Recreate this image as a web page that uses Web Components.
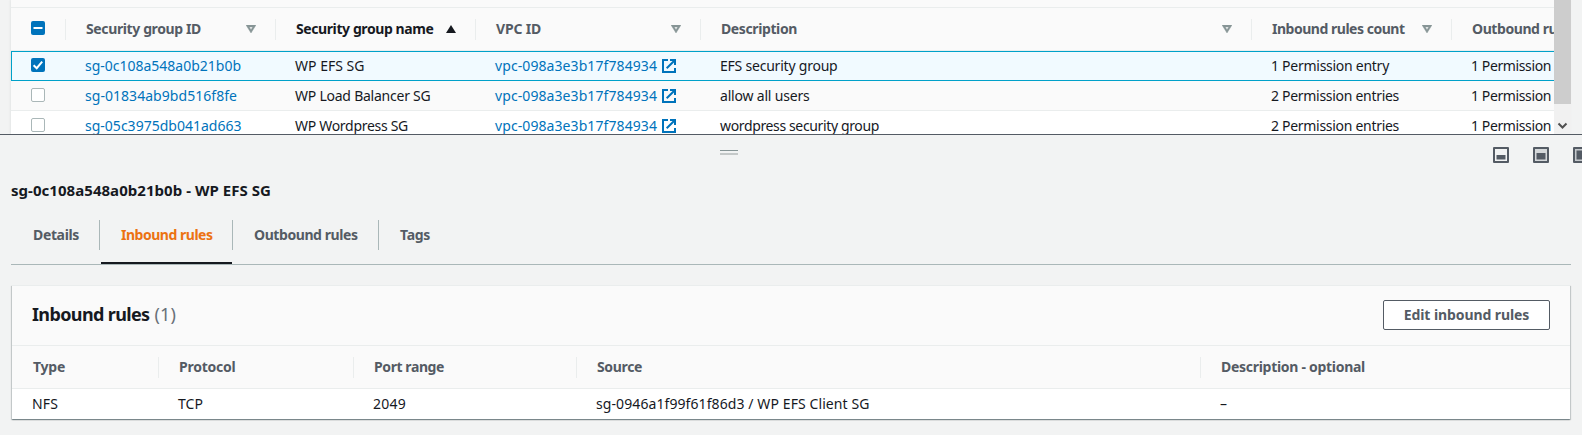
<!DOCTYPE html>
<html lang="en">
<head>
<meta charset="utf-8">
<title>Security groups</title>
<style>
html,body{margin:0;height:100%;overflow:hidden;background:#f2f3f3}
body{font:14px/20px "Noto Sans","Open Sans",sans-serif;color:#16191f}
</style>
</head>
<body>
<sg-page></sg-page>
<script>
const define = (name, html, init) => {
  const tpl = document.createElement('template');
  tpl.innerHTML = html;
  customElements.define(name, class extends HTMLElement {
    constructor() {
      super();
      this.attachShadow({mode: 'open'}).append(tpl.content.cloneNode(true));
    }
    connectedCallback() { if (init) init(this, this.shadowRoot); }
  });
};

/* Single-line label tracked to the given width */
define('fit-text', `<style>:host{display:block;white-space:nowrap;flex:none}span{display:inline-block}</style><span><slot></slot></span>`, (el, root) => {
  const w = parseFloat(el.getAttribute('w'));
  const span = root.querySelector('span');
  const n = el.textContent.length;
  if (w && n) {
    span.style.letterSpacing = '0px';
    span.style.letterSpacing = ((w - span.getBoundingClientRect().width) / n).toFixed(3) + 'px';
  }
});

define('check-box', `<style>:host{display:block;width:14px;height:14px}svg{display:block}.on,.mid{display:none}
:host([state=on]) .on,:host([state=mid]) .mid{display:block}:host([state]) .off{display:none}</style>
<svg width="14" height="14" viewBox="0 0 14 14">
<rect class="off" x=".5" y=".5" width="13" height="13" rx="1.5" fill="#fff" stroke="#aab7b8"/>
<g class="on"><rect width="14" height="14" rx="2" fill="#0073bb"/><path d="M2.6 7.2 5.7 10.2 11.2 3.6" fill="none" stroke="#fff" stroke-width="2"/></g>
<g class="mid"><rect width="14" height="14" rx="2" fill="#0073bb"/><path d="M2.5 7h9" stroke="#fff" stroke-width="2"/></g>
</svg>`);

define('sort-icon', `<style>:host{display:block;width:10px;height:8px}svg{display:block}.up{display:none}:host([up]) .up{display:block}:host([up]) .down{display:none}</style>
<svg width="10" height="8" viewBox="0 0 10 8"><path class="down" d="M0 0h10L5 8zM3.3 2l1.7 2.8L6.7 2z" fill="#879596" fill-rule="evenodd" stroke="#879596" stroke-width=".4"/><path class="up" d="M5 0 10 8H0z" fill="#16191f"/></svg>`);

define('external-link', `<style>:host{display:flex;gap:5px;color:#0073bb}svg{display:block;margin-top:3px}</style>
<fit-text w="162"><slot></slot></fit-text>
<svg width="14" height="14" viewBox="0 0 14 14" fill="none" stroke="#0073bb" stroke-width="2"><path d="M6 1H1v12h12V9"/><path d="M8 1h5v5M12.8 1.2 4.7 9.3"/></svg>`, (el, root) => {
  root.querySelector('fit-text').textContent = el.textContent;
  root.querySelector('fit-text').connectedCallback();
});

define('head-cell', `<style>:host{display:flex;box-sizing:border-box;height:21px;border-left:1px solid #eaeded;padding-left:20px;font-weight:700;color:#545b64;line-height:20px;overflow:visible}
:host([first]){border-left-color:transparent}:host([sorted]){color:#16191f}
::slotted(sort-icon){margin:6px 19px 0 auto}</style><slot></slot>`);

define('group-row', `<style>:host{display:block;height:30px;box-sizing:border-box;border-bottom:1px solid #eaeded;background:#fff}
:host([alt]){background:#fafafa}:host([selected]){background:#f1faff;border:1px solid #00a1c9;border-right:0;margin-top:-1px;height:30px;position:relative}
.r{display:grid;grid-template-columns:54px 210px 200px 225px 551px 200px 102px}
:host([selected]) .r{margin-left:-1px;margin-top:-1px}
.r{padding-top:5px}::slotted(*){padding-left:20px}::slotted(check-box){margin:2px 0 0 20px;padding:0}</style><div class="r"><slot></slot></div>`);

define('groups-table', `<style>
:host{display:block;height:134px;overflow:hidden}
.wrap{display:flex;margin-left:11px;width:1560px;height:134px;box-shadow:-1px 0 2px rgba(0,28,36,.06)}
.t{width:1543px;overflow:hidden;background:#fafafa}
.top{height:7px;border-bottom:1px solid #eaeded}
.head{display:grid;grid-template-columns:54px 210px 200px 225px 551px 200px 102px;height:43px;padding-top:11px;box-sizing:border-box;border-bottom:1px solid #eaeded;margin-bottom:1px}
.head check-box{margin:2px 0 0 20px}
.link{color:#0073bb}
.bar{width:17px;background:#f1f1f1}.thumb{height:104px;background:#cdcdcd}
.bar svg{display:block;margin:17px 0 0 3px}
</style>
<div class="wrap"><div class="t"><div class="top"></div>
<div class="head"><check-box state="mid"></check-box>
<head-cell><fit-text w="115">Security group ID</fit-text><sort-icon></sort-icon></head-cell>
<head-cell sorted><fit-text w="137.5">Security group name</fit-text><sort-icon up></sort-icon></head-cell>
<head-cell><fit-text w="45">VPC ID</fit-text><sort-icon></sort-icon></head-cell>
<head-cell><fit-text w="76">Description</fit-text><sort-icon></sort-icon></head-cell>
<head-cell><fit-text w="132.5">Inbound rules count</fit-text><sort-icon></sort-icon></head-cell>
<head-cell><fit-text w="103.5">Outbound rules</fit-text></head-cell></div>
<group-row selected><check-box state="on"></check-box><fit-text class="link" w="156">sg-0c108a548a0b21b0b</fit-text><fit-text w="69.5">WP EFS SG</fit-text><external-link>vpc-098a3e3b17f784934</external-link><fit-text w="117.5">EFS security group</fit-text><fit-text w="118">1 Permission entry</fit-text><fit-text w="80">1 Permission</fit-text></group-row>
<group-row alt><check-box></check-box><fit-text class="link" w="152">sg-01834ab9bd516f8fe</fit-text><fit-text w="135.5">WP Load Balancer SG</fit-text><external-link>vpc-098a3e3b17f784934</external-link><fit-text w="89.5">allow all users</fit-text><fit-text w="128">2 Permission entries</fit-text><fit-text w="80">1 Permission</fit-text></group-row>
<group-row><check-box></check-box><fit-text class="link" w="156.5">sg-05c3975db041ad663</fit-text><fit-text w="113">WP Wordpress SG</fit-text><external-link>vpc-098a3e3b17f784934</external-link><fit-text w="159">wordpress security group</fit-text><fit-text w="128">2 Permission entries</fit-text><fit-text w="80">1 Permission</fit-text></group-row>
</div><div class="bar"><div class="thumb"></div><svg width="11" height="10" viewBox="0 0 11 10"><path d="M1.5 2.5 5.5 6.5 9.5 2.5" fill="none" stroke="#505050" stroke-width="2"/></svg></div></div>`);

define('split-bar', `<style>:host{display:grid;grid-template-columns:720px 18px 1fr;border-top:1px solid #545b64;height:43px;overflow:hidden}
.grip{grid-column:2;margin-top:15px;height:3px;border-top:1px solid #879596}.grip i{display:block;height:2px;background:#c4c8c8;margin-top:2px}
.icons{display:flex;gap:24px;padding:12px 0 0 755px;min-width:0}svg{display:block;flex:none}</style>
<div class="grip"><i></i></div><div class="icons">
<svg width="16" height="16" viewBox="0 0 16 16"><path d="M1 1h14v14H1z" fill="#f2f3f3" stroke="#545b64" stroke-width="2" stroke-linejoin="round"/><path d="M3.5 8h9v4.5h-9z" fill="#545b64"/></svg>
<svg width="16" height="16" viewBox="0 0 16 16"><path d="M1 1h14v14H1z" fill="#d5d8da" stroke="#545b64" stroke-width="2" stroke-linejoin="round"/><path d="M3.5 6h9v6.5h-9z" fill="#545b64"/></svg>
<svg width="16" height="16" viewBox="0 0 16 16"><path d="M1 1h14v14H1z" fill="#c5c9cc" stroke="#545b64" stroke-width="2" stroke-linejoin="round"/><path d="M3.5 3.5h9v9h-9z" fill="#545b64"/></svg></div>`);

define('tab-item', `<style>:host{display:block;box-sizing:border-box;height:44px;position:relative;font-weight:700;color:#545b64}
.b{box-sizing:border-box;height:30px;border-right:1px solid #aab7b8;padding:5px 0 0 21px}:host([last]) .b{border:0}
:host([active]){color:#ec7211}.u{display:none;position:absolute;left:1px;right:1px;top:42px;height:2px;background:#16191f}:host([active]) .u{display:block}</style><div class="b"><slot></slot></div><div class="u"></div>`);

define('detail-tabs', `<style>:host{display:grid;grid-template-columns:89px 133px 146px 1fr;margin:0 11px;border-bottom:1px solid #aab7b8}tab-item:first-of-type fit-text{margin-left:1px}</style>
<tab-item><fit-text w="46">Details</fit-text></tab-item><tab-item active><fit-text w="91.5">Inbound rules</fit-text></tab-item><tab-item><fit-text w="103.5">Outbound rules</fit-text></tab-item><tab-item last><fit-text w="30">Tags</fit-text></tab-item>`);

define('outline-button', `<style>:host{display:block}button{display:flex;justify-content:center;align-items:center;box-sizing:border-box;width:167px;height:30px;border:1px solid #545b64;border-radius:2px;background:#fff;color:#545b64;font:inherit;font-weight:700;padding:0}</style><button><slot></slot></button>`);

define('rules-card', `<style>:host{display:block;margin:20px 12px 0;height:134px;background:#fff;box-shadow:0 1px 1px 0 rgba(0,28,36,.3),1px 1px 1px 0 rgba(0,28,36,.15),-1px 1px 1px 0 rgba(0,28,36,.15);border-top:1px solid #eaeded;box-sizing:border-box}
.h{display:flex;justify-content:space-between;background:#fafafa;height:60px;box-sizing:border-box;padding:14px 20px 0;border-bottom:1px solid #eaeded}
.title{display:flex;gap:5px;font-size:18px;line-height:26px;margin-top:1px;font-weight:700}.n{font-weight:400;color:#687078}
.c,.r{display:grid;grid-template-columns:146px 195px 223px 624px 1fr}
.c{background:#fafafa;height:43px;box-sizing:border-box;padding-top:11px;border-bottom:1px solid #eaeded}
.r{padding-top:5px}.r fit-text{padding-left:20px}</style>
<div class="h"><div class="title"><fit-text w="117.5">Inbound rules</fit-text><fit-text class="n" w="21.5">(1)</fit-text></div><outline-button><fit-text w="125.5">Edit inbound rules</fit-text></outline-button></div>
<div class="c"><head-cell first><fit-text w="32">Type</fit-text></head-cell><head-cell><fit-text w="56.5">Protocol</fit-text></head-cell><head-cell><fit-text w="70">Port range</fit-text></head-cell><head-cell><fit-text w="45">Source</fit-text></head-cell><head-cell><fit-text w="144">Description - optional</fit-text></head-cell></div>
<div class="r"><fit-text w="26">NFS</fit-text><fit-text w="25">TCP</fit-text><fit-text w="33">2049</fit-text><fit-text w="273.5">sg-0946a1f99f61f86d3 / WP EFS Client SG</fit-text><fit-text>–</fit-text></div>`);

define('sg-page', `<style>:host{display:block;width:1582px;height:435px;overflow:hidden}
h2{margin:2px 0 20px 11px;font-size:15px;line-height:20px;font-weight:700;height:20px}</style>
<groups-table></groups-table><split-bar></split-bar><h2><fit-text w="260">sg-0c108a548a0b21b0b - WP EFS SG</fit-text></h2><detail-tabs></detail-tabs><rules-card></rules-card>`);
</script>
</body>
</html>
